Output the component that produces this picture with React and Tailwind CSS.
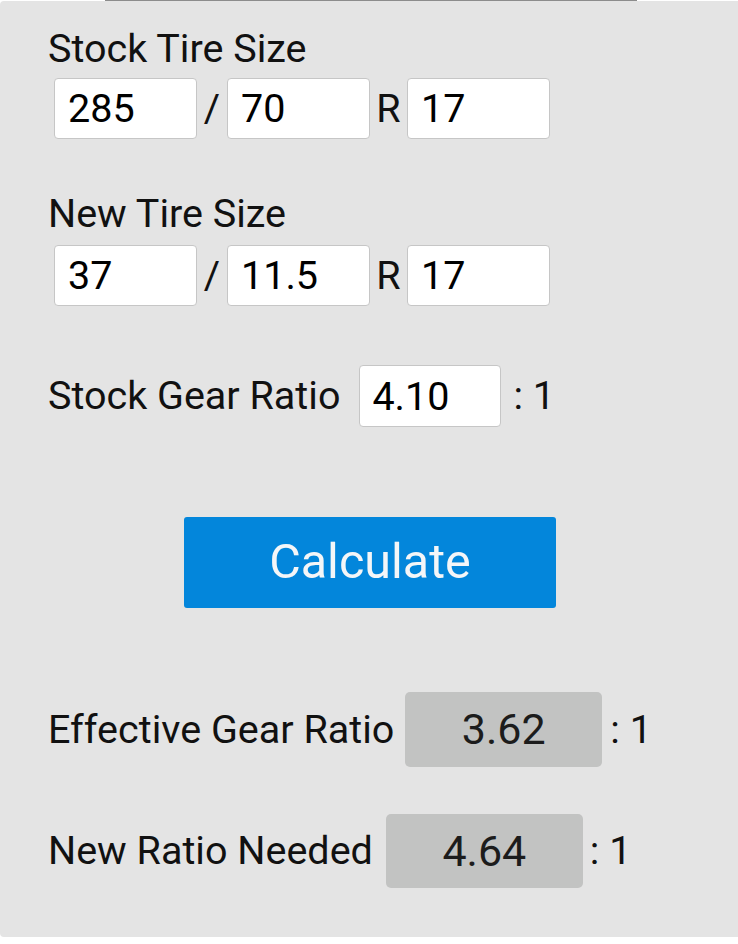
import React from "react";

// Gear ratio calculator card (mobile-style form)

function Box({ value, className = "" }) {
  return (
    <input
      readOnly
      value={value}
      className={`h-[61px] w-[143px] rounded-[4px] border border-[#c6c6c6] bg-white pl-[13px] text-[39.5px] text-black outline-none ${className}`}
    />
  );
}

function TireRow({ label, size, labelGap, className = "" }) {
  return (
    <div className={className}>
      <div className={`leading-[46px] ${labelGap}`}>{label}</div>
      <div className="ml-[6px] flex items-center">
        <Box value={size[0]} />
        <span className="w-[30px] text-center leading-[46px]">/</span>
        <Box value={size[1]} className="w-[142px]" />
        <span className="w-[37px] text-center leading-[46px]">R</span>
        <Box value={size[2]} />
      </div>
    </div>
  );
}

function ResultRow({ label, value, gap, colonGap, className = "" }) {
  return (
    <div className={`flex items-center ${className}`}>
      <span className="leading-[46px]">{label}</span>
      <div
        className={`flex h-full w-[197px] items-center justify-center rounded-[5px] bg-[#c2c3c2] text-[43px] leading-[43px] text-[#1c1c1c] ${gap}`}
      >
        {value}
      </div>
      <span className={`leading-[46px] ${colonGap}`}>: 1</span>
    </div>
  );
}

export default function App() {
  return (
    <div className="h-[944px] w-[738px] overflow-hidden bg-white font-[Roboto,sans-serif] text-[39.5px] text-[#111]">
      {/* cut-off content above the card */}
      <div className="h-[1px]">
        <div className="ml-[105px] h-full w-[532px] bg-[#8c8c8c]" />
      </div>

      <div className="w-[760px] rounded-[4px] bg-[#e4e4e4] pb-[49px] pl-[48px] pt-[25px]">
        <TireRow
          label="Stock Tire Size"
          size={["285", "70", "17"]}
          labelGap="mb-[6px]"
        />
        <TireRow
          label="New Tire Size"
          size={["37", "11.5", "17"]}
          labelGap="mb-[8px]"
          className="mt-[52px]"
        />

        <div className="mt-[59px] flex h-[62px] items-center">
          <span className="leading-[46px]">Stock Gear Ratio</span>
          <input
            readOnly
            value="4.10"
            className="ml-[19px] h-[62px] w-[142px] rounded-[4px] border border-[#c6c6c6] bg-white pl-[12px] text-[39.5px] text-black outline-none"
          />
          <span className="ml-[12px] leading-[46px]">: 1</span>
        </div>

        <div className="mt-[90px] flex">
          <button className="ml-[136px] h-[91px] w-[372px] rounded-[3px] bg-[#0386db] text-[48.5px] text-[#f4f6f8]">
            Calculate
          </button>
        </div>

        <ResultRow
          label="Effective Gear Ratio"
          value="3.62"
          gap="ml-[11px]"
          colonGap="ml-[8px]"
          className="mt-[84px] h-[75px]"
        />
        <ResultRow
          label="New Ratio Needed"
          value="4.64"
          gap="ml-[13px]"
          colonGap="ml-[7px]"
          className="mt-[47px] h-[74px]"
        />
      </div>
    </div>
  );
}
